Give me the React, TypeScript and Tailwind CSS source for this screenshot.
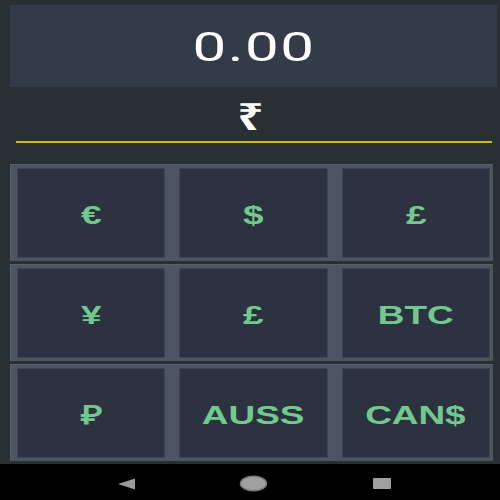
import React from "react";

const rows = [
  ["€", "$", "£"],
  ["¥", "£", "BTC"],
  ["₽", "AUSS", "CAN$"],
];

export default function App() {
  return (
    <div className="w-[500px] h-[500px] bg-[#283034] flex flex-col overflow-hidden" style={{ fontFamily: "Roboto, 'Noto Sans', sans-serif" }}>
      <div className="pt-[5px] pl-[10px] pr-[3px]">
        <div className="h-[82px] bg-[#333a48] flex items-center justify-center pt-[3px]">
          <span className="text-white text-[40px] leading-none scale-x-150 tracking-[1px]" style={{ fontFamily: "Roboto, sans-serif" }}>0.00</span>
        </div>
      </div>
      <div className="h-[54px] flex items-center justify-center pt-[6px]">
        <span className="text-white text-[36px] leading-none font-bold scale-x-125" style={{ fontFamily: "'Noto Sans', 'DejaVu Sans', sans-serif" }}>₹</span>
      </div>
      <div className="ml-[16px] mr-[8px] h-[2px] bg-[#c9bb2c]" />
      <div className="mt-[21px] ml-[10px] w-[483px] flex flex-col gap-[3px]">
        {rows.map((row, i) => (
          <div key={i} className="h-[97px] bg-[#4d5462] border-t border-l border-[#5a616e] pl-[6px] pr-[3px] py-[3px] flex gap-[14px]">
            {row.map((label, j) => (
              <div key={j} className="flex-1 bg-[#2d3240] border border-[#3f4653] flex items-center justify-center pt-[3px]">
                <span className="text-[#72c98e] text-[26px] font-bold leading-none scale-x-[1.42]" style={{ fontFamily: "'Liberation Sans', Arial, sans-serif" }}>{label}</span>
              </div>
            ))}
          </div>
        ))}
      </div>
      <div className="mt-[3px] flex-1 bg-black flex items-center">
        <div className="relative w-full h-full">
          <svg className="absolute left-[117px] top-[14px]" width="19" height="12" viewBox="0 0 19 12">
            <polygon points="1,6 18,0.5 18,11.5" fill="#9a9a9a" />
          </svg>
          <svg className="absolute left-[239px] top-[11px]" width="29" height="17" viewBox="0 0 29 17">
            <ellipse cx="14.5" cy="8.5" rx="13" ry="7.3" fill="#a0a0a0" stroke="#7a7a7a" strokeWidth="1.5" />
          </svg>
          <div className="absolute left-[373px] top-[14px] w-[18px] h-[11px] bg-[#a0a0a0] rounded-[1px]" />
        </div>
      </div>
    </div>
  );
}
